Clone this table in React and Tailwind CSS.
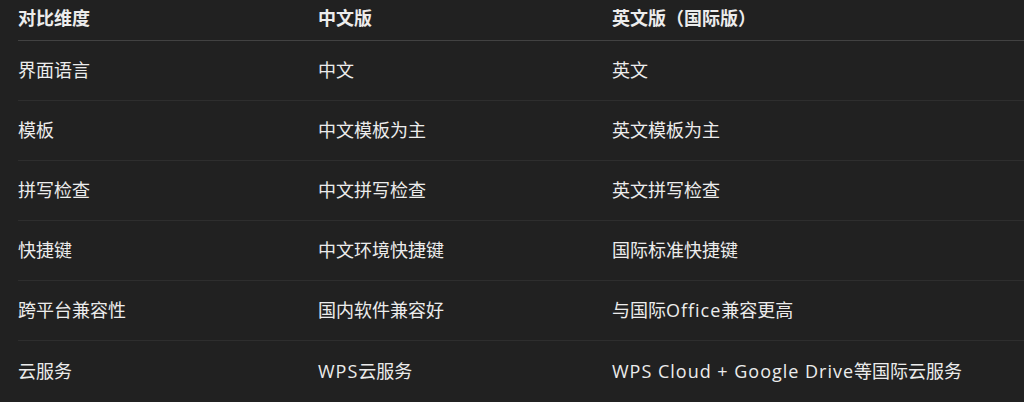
const rows = [
  ['界面语言', '中文', '英文'],
  ['模板', '中文模板为主', '英文模板为主'],
  ['拼写检查', '中文拼写检查', '英文拼写检查'],
  ['快捷键', '中文环境快捷键', '国际标准快捷键'],
  ['跨平台兼容性', '国内软件兼容好', '与国际Office兼容更高'],
  ['云服务', 'WPS云服务', 'WPS Cloud + Google Drive等国际云服务'],
]

// latin runs render a touch wider in the source font
function Cell({ text }) {
  const parts = text.split(/([A-Za-z+ ]+)/).filter(Boolean)
  return (
    <div>
      {parts.map((p, i) =>
        /[A-Za-z]/.test(p) ? (
          <span key={i} className="tracking-[0.055em]">{p}</span>
        ) : (
          <span key={i}>{p}</span>
        )
      )}
    </div>
  )
}

export default function App() {
  return (
    <div
      className="w-[1024px] h-[402px] bg-[#212121] text-[#ececec] overflow-hidden pl-[18px]"
      style={{ fontFamily: '"Open Sans", "Noto Sans CJK SC", sans-serif' }}
    >
      <div className="grid grid-cols-[300px_294px_1fr] h-[41px] items-center border-b border-[#424242] text-[18px] font-bold">
        <div className="pb-[3px]">对比维度</div>
        <div className="pb-[3px]">中文版</div>
        <div className="pb-[3px]">英文版（国际版）</div>
      </div>
      {rows.map((r, i) => (
        <div
          key={i}
          className={`grid grid-cols-[300px_294px_1fr] h-[60px] items-center text-[18px] ${
            i < rows.length - 1 ? 'border-b border-[#2e2e2e]' : ''
          }`}
        >
          <Cell text={r[0]} />
          <Cell text={r[1]} />
          <Cell text={r[2]} />
        </div>
      ))}
    </div>
  )
}
